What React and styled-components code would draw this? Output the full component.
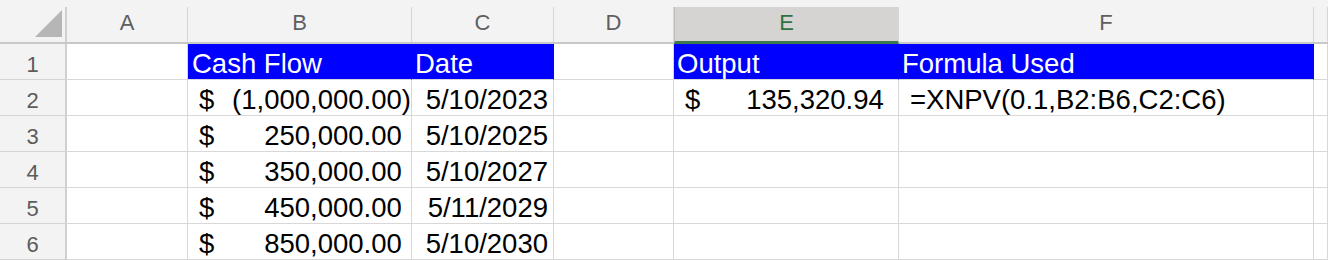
import React from "react";
import styled, { createGlobalStyle } from "styled-components";

const COLUMNS = "67px 121px 224px 142px 120px 225px 415px 1fr";

const GlobalStyle = createGlobalStyle`
  body {
    margin: 0;
    background: #fff;
    overflow: hidden;
    font-family: "Liberation Sans", Arial, Helvetica, sans-serif;
  }
`;

const Sheet = styled.div`
  width: 1328px;
  height: 260px;
  display: flex;
  flex-direction: column;
  background: #fff;
`;

const HeaderRow = styled.div`
  display: grid;
  grid-template-columns: ${COLUMNS};
  align-items: end;
  flex: 0 0 44px;
  box-sizing: border-box;
  background: #f3f3f3;
  border-bottom: 2px solid #c8c8c8;
`;

const Corner = styled.div`
  height: 35px;
  box-sizing: border-box;
  border-right: 2px solid #d0d0d0;
  svg {
    display: block;
  }
`;

const ColHeader = styled.div`
  height: ${(p) => (p.$selected ? "37px" : "35px")};
  margin-bottom: ${(p) => (p.$selected ? "-2px" : "0")};
  box-sizing: border-box;
  border-right: 1px solid #d6d6d6;
  border-left: ${(p) => (p.$selected ? "1px solid #bdbdbd" : "none")};
  border-bottom: ${(p) => (p.$selected ? "3px solid #3c7a4d" : "none")};
  background: ${(p) => (p.$selected ? "#d6d4d2" : "transparent")};
  color: ${(p) => (p.$selected ? "#2f7140" : "#5f5f5f")};
  font-size: 22px;
  line-height: 32px;
  text-align: center;
`;

const Row = styled.div`
  display: grid;
  grid-template-columns: ${COLUMNS};
  flex: 0 0 36px;
`;

const RowNumber = styled.div`
  box-sizing: border-box;
  height: 36px;
  background: #f3f3f3;
  border-right: 2px solid #d0d0d0;
  border-bottom: 1px solid #d4d4d4;
  color: #5c5c5c;
  font-size: 22px;
  line-height: 31px;
  padding-top: 5px;
  text-align: center;
`;

const Cell = styled.div`
  box-sizing: border-box;
  height: 36px;
  display: flex;
  justify-content: ${(p) =>
    p.$money ? "space-between" : p.$right ? "flex-end" : "flex-start"};
  padding: 4px ${(p) => p.$pr || 0}px 0 ${(p) => p.$pl || 0}px;
  border-right: 1px solid ${(p) => (p.$fill ? "#0000ff" : "#d8d8d8")};
  border-bottom: 1px solid #d8d8d8;
  background: ${(p) => (p.$fill ? "#0000ff" : "#fff")};
  color: ${(p) => (p.$fill ? "#fff" : "#000")};
  font-size: 27.5px;
  line-height: 31px;
  white-space: nowrap;
  overflow: hidden;
`;

const Hidden = styled.span`
  visibility: hidden;
`;

const Money = ({ value, pr }) => {
  const negative = value < 0;
  const text = Math.abs(value).toLocaleString("en-US", {
    minimumFractionDigits: 2,
    maximumFractionDigits: 2,
  });
  return (
    <Cell $money $pl={11} $pr={pr}>
      <span>$</span>
      <span>
        {negative ? `(${text})` : text}
        {!negative && <Hidden>)</Hidden>}
      </span>
    </Cell>
  );
};

const flows = [
  [-1000000, "5/10/2023"],
  [250000, "5/10/2025"],
  [350000, "5/10/2027"],
  [450000, "5/11/2029"],
  [850000, "5/10/2030"],
];

const letters = ["A", "B", "C", "D", "E", "F", ""];

export default function App() {
  return (
    <>
      <GlobalStyle />
      <Sheet>
        <HeaderRow>
          <Corner>
            <svg width="65" height="35" viewBox="0 0 65 35">
              <polygon points="62,3 62,30 35,30" fill="#b6b6b6" />
            </svg>
          </Corner>
          {letters.map((l, i) => (
            <ColHeader key={i} $selected={l === "E"}>
              {l}
            </ColHeader>
          ))}
        </HeaderRow>

        <Row>
          <RowNumber>1</RowNumber>
          <Cell />
          <Cell $fill $pl={4}>Cash Flow</Cell>
          <Cell $fill $pl={3}>Date</Cell>
          <Cell />
          <Cell $fill $pl={3}>Output</Cell>
          <Cell $fill $pl={3}>Formula Used</Cell>
          <Cell />
        </Row>

        {flows.map(([amount, date], i) => (
          <Row key={date}>
            <RowNumber>{i + 2}</RowNumber>
            <Cell />
            <Money value={amount} pr={0} />
            <Cell $right $pr={5}>{date}</Cell>
            <Cell />
            {i === 0 ? <Money value={135320.94} pr={5} /> : <Cell />}
            {i === 0 ? (
              <Cell $pl={11}>=XNPV(0.1,B2:B6,C2:C6)</Cell>
            ) : (
              <Cell />
            )}
            <Cell />
          </Row>
        ))}
      </Sheet>
    </>
  );
}
